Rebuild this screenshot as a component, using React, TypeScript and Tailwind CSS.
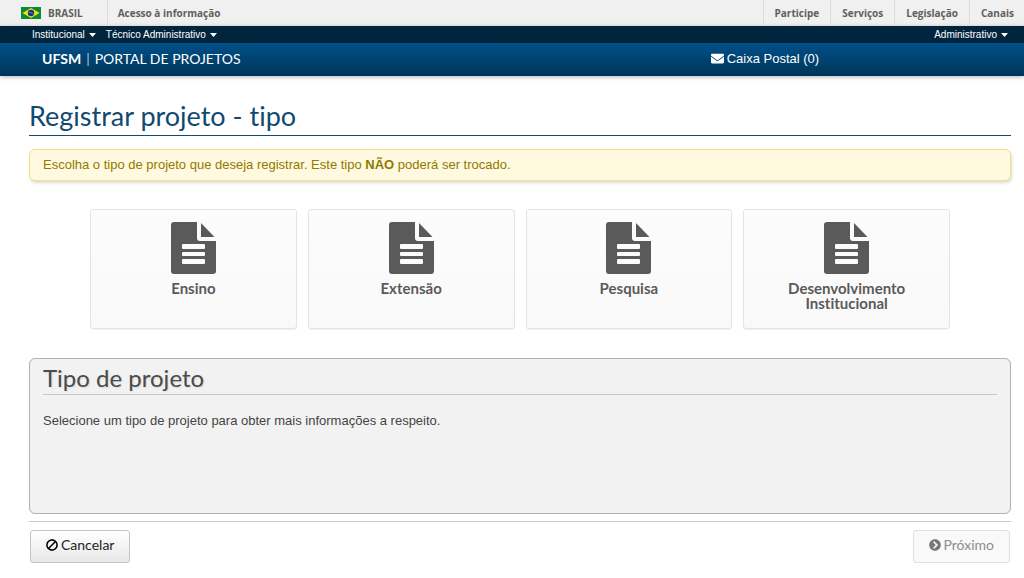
import { FaBan, FaChevronCircleRight, FaEnvelope } from "react-icons/fa";

const projectTypes = ["Ensino", "Extensão", "Pesquisa", "Desenvolvimento Institucional"];

const govLinks = ["Participe", "Serviços", "Legislação", "Canais"];

const BrazilFlag = () => (
  <svg className="h-3 w-5" viewBox="0 0 20 12" aria-hidden="true">
    <rect width="20" height="12" fill="#0c8a34" />
    <path d="M10 1 18.5 6 10 11 1.5 6Z" fill="#f5dc1e" />
    <circle cx="10" cy="6" r="3.2" fill="#173a7d" />
    <path d="M7.3 5.2Q10.4 4.9 12.6 7.4" stroke="#8fa9c4" strokeWidth="0.6" fill="none" />
  </svg>
);

const FileIcon = () => (
  <svg className="h-[52px] w-[45px]" viewBox="0 0 45 52" fill="#5a5a5a" aria-hidden="true">
    <path
      fillRule="evenodd"
      d="M3 0H26V16Q26 19 29 19H45V49Q45 52 42 52H3Q0 52 0 49V3Q0 0 3 0ZM12 22Q11 22 11 23V26Q11 27 12 27H33Q34 27 34 26V23Q34 22 33 22ZM12 30Q11 30 11 31V33Q11 34 12 34H33Q34 34 34 33V31Q34 30 33 30ZM12 37Q11 37 11 38V41Q11 42 12 42H33Q34 42 34 41V38Q34 37 33 37Z"
    />
    <path d="M30 1 43.5 15H30Z" />
  </svg>
);

const MenuButton = ({ label }: { label: string }) => (
  <button type="button" className="flex items-center gap-1 text-white">
    {label}
    <svg className="h-1 w-[7px]" viewBox="0 0 7 4" fill="currentColor" aria-hidden="true">
      <path d="M0 0H7L3.5 4Z" />
    </svg>
  </button>
);

const GovBar = () => (
  <div className="flex h-[26px] justify-between bg-[#f0f0f0] font-['Open_Sans',sans-serif] text-[10px] font-bold text-[#606060]">
    <div className="flex">
      <a href="#" className="flex items-center gap-[7px] border-r border-[#dcdcdc] pr-6 pl-[21px]">
        <BrazilFlag />
        BRASIL
      </a>
      <a href="#" className="flex items-center px-[10px]">
        Acesso à informação
      </a>
    </div>
    <nav className="flex">
      {govLinks.map((link) => (
        <a key={link} href="#" className="flex items-center border-l border-[#dcdcdc] px-[11px] last:pr-[10px]">
          {link}
        </a>
      ))}
    </nav>
  </div>
);

const Header = () => (
  <header className="shadow-[0_1px_4px_rgba(0,0,0,0.3)]">
    <div className="flex h-[17px] items-center justify-between bg-[#01253d] pr-4 pl-8 text-[10px]">
      <div className="flex gap-[10px]">
        <MenuButton label="Institucional" />
        <MenuButton label="Técnico Administrativo" />
      </div>
      <MenuButton label="Administrativo" />
    </div>
    <div className="flex h-[33px] items-center bg-linear-to-b from-[#00508a] to-[#003659] pb-0.5 text-white">
      <a href="#" className="flex w-[69.4%] gap-[5px] pl-[42px] font-['Lato',sans-serif] text-sm">
        <span className="font-bold">UFSM</span>
        <span className="text-[#b4c6d4]">|</span>
        <span>PORTAL DE PROJETOS</span>
      </a>
      <a href="#" className="flex items-center gap-[3px] text-[13px]">
        <FaEnvelope className="size-[13px]" />
        Caixa Postal (0)
      </a>
    </div>
  </header>
);

const App = () => {
  return (
    <div className="bg-white font-['Liberation_Sans',Arial,sans-serif] text-[13px] text-[#444] [font-variant-ligatures:none]">
      <GovBar />
      <Header />

      <main className="pt-6 pr-[13px] pb-4 pl-[29px]">
        <h1 className="h-9 border-b border-[#104a70] font-['Lato',sans-serif] text-[27px] leading-8 text-[#104a70]">
          Registrar projeto - tipo
        </h1>

        <p className="mt-[13px] rounded-md border border-[#f5e27e] bg-[#fff9df] px-[13px] py-[5px] leading-5 text-[#917a00] shadow-[1px_2px_3px_rgba(0,0,0,0.15)]">
          Escolha o tipo de projeto que deseja registrar. Este tipo <strong>NÃO</strong> poderá ser trocado.
        </p>

        <div className="mt-7 grid grid-cols-4 gap-[11px] px-[61px]">
          {projectTypes.map((type) => (
            <button
              key={type}
              type="button"
              className="flex h-[120px] flex-col items-center rounded-[3px] border border-[#e4e4e4] bg-linear-to-b from-[#fcfcfc] to-[#f9f9f9] px-8 pt-3 font-['Lato',sans-serif] text-[15px] leading-[15px] font-bold text-[#5a5a5a] shadow-[0_1px_1px_rgba(0,0,0,0.06)]"
            >
              <FileIcon />
              <span className="mt-[7px]">{type}</span>
            </button>
          ))}
        </div>

        <section className="mt-[29px] min-h-[156px] rounded-md border border-[#b0b0b0] bg-[#f2f2f2] px-[13px] pt-[3px]">
          <h2 className="h-[33px] border-b border-[#c8c8c8] font-['Lato',sans-serif] text-2xl leading-8 text-[#4b4b4b] text-shadow-[1px_1px_2px_rgba(0,0,0,0.1)]">
            Tipo de projeto
          </h2>
          <p className="mt-4 leading-5">Selecione um tipo de projeto para obter mais informações a respeito.</p>
        </section>

        <div className="mt-[7px] flex justify-between border-t border-[#c8c8c8] px-px pt-2 font-['Lato',sans-serif] text-sm">
          <button
            type="button"
            className="flex h-[33px] items-center gap-[3px] rounded-[3px] border border-[#c4c4c4] bg-linear-to-b from-white to-[#e8e8e8] px-[15px] pb-[3px] text-[#222]"
          >
            <FaBan className="size-3 -scale-x-100 text-black" />
            Cancelar
          </button>
          <button
            type="button"
            disabled
            className="flex h-[33px] items-center gap-[3px] rounded-[3px] border border-[#e0e0e0] bg-[#f9f9f9] px-[15px] pb-[3px] text-[#8c8c8c]"
          >
            <FaChevronCircleRight className="size-3 text-[#777]" />
            Próximo
          </button>
        </div>
      </main>
    </div>
  );
};

export default App;
